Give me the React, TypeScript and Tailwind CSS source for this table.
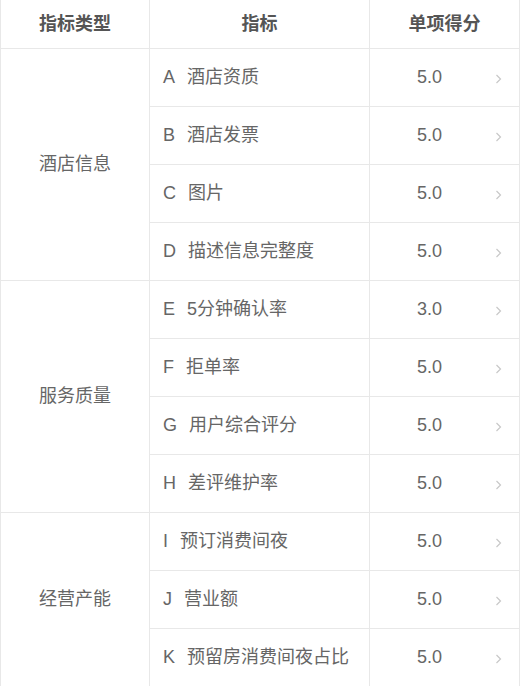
import { FC } from "react";

type Item = { code: string; name: string; score: string };
type Group = { type: string; items: Item[] };

const groups: Group[] = [
    {
        type: "酒店信息",
        items: [
            { code: "A", name: "酒店资质", score: "5.0" },
            { code: "B", name: "酒店发票", score: "5.0" },
            { code: "C", name: "图片", score: "5.0" },
            { code: "D", name: "描述信息完整度", score: "5.0" },
        ],
    },
    {
        type: "服务质量",
        items: [
            { code: "E", name: "5分钟确认率", score: "3.0" },
            { code: "F", name: "拒单率", score: "5.0" },
            { code: "G", name: "用户综合评分", score: "5.0" },
            { code: "H", name: "差评维护率", score: "5.0" },
        ],
    },
    {
        type: "经营产能",
        items: [
            { code: "I", name: "预订消费间夜", score: "5.0" },
            { code: "J", name: "营业额", score: "5.0" },
            { code: "K", name: "预留房消费间夜占比", score: "5.0" },
        ],
    },
];

const Chevron: FC = () => (
    <svg width="7" height="11" viewBox="0 0 7 11" className="absolute right-[17px] top-1/2 -translate-y-1/2 mt-[1px]">
        <path d="M1.5 1.5 L5.5 5.5 L1.5 9.5" fill="none" stroke="#c8c8c8" strokeWidth="1.2" />
    </svg>
);

const cell = "border-r border-b border-[#e8e8e8]";

const App: FC = () => {
    return (
        <div
            className="bg-white w-[527px] h-[686px] overflow-hidden"
            style={{ fontFamily: '"Liberation Sans", "Noto Sans CJK SC", sans-serif' }}
        >
            <div className="grid grid-cols-[149px_220px_150px] w-[520px] border-l border-[#e8e8e8] text-[18px] text-[#666]">
                {/* header */}
                <div className={`${cell} h-[49px] flex items-center justify-center font-bold text-[#555]`}>指标类型</div>
                <div className={`${cell} h-[49px] flex items-center justify-center font-bold text-[#555]`}>指标</div>
                <div className={`${cell} h-[49px] flex items-center justify-center font-bold text-[#555]`}>单项得分</div>

                {groups.map((g) => (
                    <>
                        <div
                            key={g.type}
                            className={`${cell} flex items-center justify-center ${g.items.length === 4 ? "row-span-4" : "row-span-3"}`}
                        >
                            {g.type}
                        </div>
                        {g.items.map((it) => (
                            <>
                                <div key={it.code} className={`${cell} h-[58px] flex items-center pl-[13px]`}>
                                    <span className="mr-3">{it.code}</span>
                                    <span>{it.name}</span>
                                </div>
                                <div key={it.code + "s"} className={`${cell} h-[58px] relative flex items-center pr-[30px]`}>
                                    <span className="flex-1 text-center">{it.score}</span>
                                    <Chevron />
                                </div>
                            </>
                        ))}
                    </>
                ))}
            </div>
        </div>
    );
};

export default App;
